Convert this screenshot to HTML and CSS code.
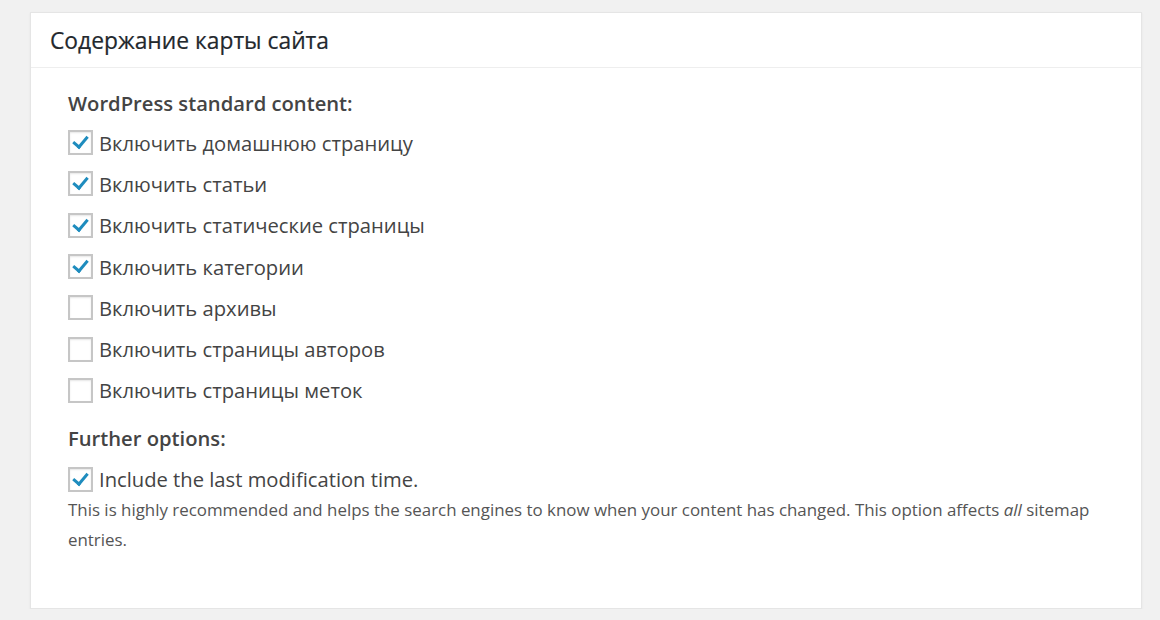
FILE: index.html
```html
<!DOCTYPE html>
<html>
<head>
<meta charset="utf-8">
<link rel="stylesheet" href="styles.css">
</head>
<body>
<div class="panel">
  <div class="panel-head"><h2 class="title">Содержание карты сайта</h2></div>
  <div class="panel-body">
    <h4 class="group-title">WordPress standard content:</h4>
    <ul class="opts">
      <li><span class="cb checked"></span><span class="lbl">Включить домашнюю страницу</span></li>
      <li><span class="cb checked"></span><span class="lbl">Включить статьи</span></li>
      <li><span class="cb checked"></span><span class="lbl">Включить статические страницы</span></li>
      <li><span class="cb checked"></span><span class="lbl">Включить категории</span></li>
      <li><span class="cb"></span><span class="lbl">Включить архивы</span></li>
      <li><span class="cb"></span><span class="lbl">Включить страницы авторов</span></li>
      <li><span class="cb"></span><span class="lbl">Включить страницы меток</span></li>
    </ul>
    <h4 class="group-title further">Further options:</h4>
    <ul class="opts opts-further">
      <li><span class="cb checked"></span><span class="lbl">Include the last modification time.</span></li>
    </ul>
    <p class="desc">This is highly recommended and helps the search engines to know when your content has changed. This option affects <i>all</i> sitemap entries.</p>
  </div>
</div>
</body>
</html>
```
FILE: styles.css
```css
html, body { margin: 0; padding: 0; }
body {
  background: #f1f1f1;
  font-family: "Open Sans", "Noto Sans", sans-serif;
  color: #444;
  padding: 12px 18px 0 30px;
}
.panel {
  width: 1110px;
  height: 595px;
  background: #fff;
  border: 1px solid #e5e5e5;
  box-shadow: 0 1px 2px rgba(0,0,0,0.06);
}
.panel-head {
  height: 54px;
  border-bottom: 1px solid #eee;
  display: flex;
  align-items: center;
  padding-left: 19px;
}
.title {
  margin: 0;
  font-size: 22.8px;
  font-weight: 400;
  color: #23282d;
  -webkit-text-stroke: 0.2px #23282d;
}
.panel-body {
  padding: 20px 36px 0 37px;
}
.group-title {
  margin: 0;
  font-size: 20.2px;
  font-weight: 600;
  color: #444;
  line-height: 30px;
}
.further { margin-top: 12px; }
.opts { list-style: none; margin: 4px 0 0; padding: 0; }
.opts li {
  display: flex;
  align-items: center;
  height: 41.3px;
}
.opts-further { margin-top: 10px; }
.opts-further li { height: 32px; }
.cb {
  width: 21px;
  height: 21px;
  border: 2px solid #c6c6c6;
  box-shadow: inset 0 1px 2px rgba(0,0,0,0.1);
  background: #fff;
  position: relative;
  flex: none;
  margin-right: 6px;
}
.cb.checked::after {
  content: "";
  position: absolute;
  left: 6px;
  top: 1px;
  width: 6px;
  height: 12px;
  border: solid #1e8cbe;
  border-width: 0 3.5px 3.5px 0;
  transform: rotate(40deg);
}
.lbl {
  font-size: 20.2px;
  color: #444;
}
.desc {
  margin: 0;
  font-size: 16.9px;
  line-height: 30px;
  color: #555;
}
```
